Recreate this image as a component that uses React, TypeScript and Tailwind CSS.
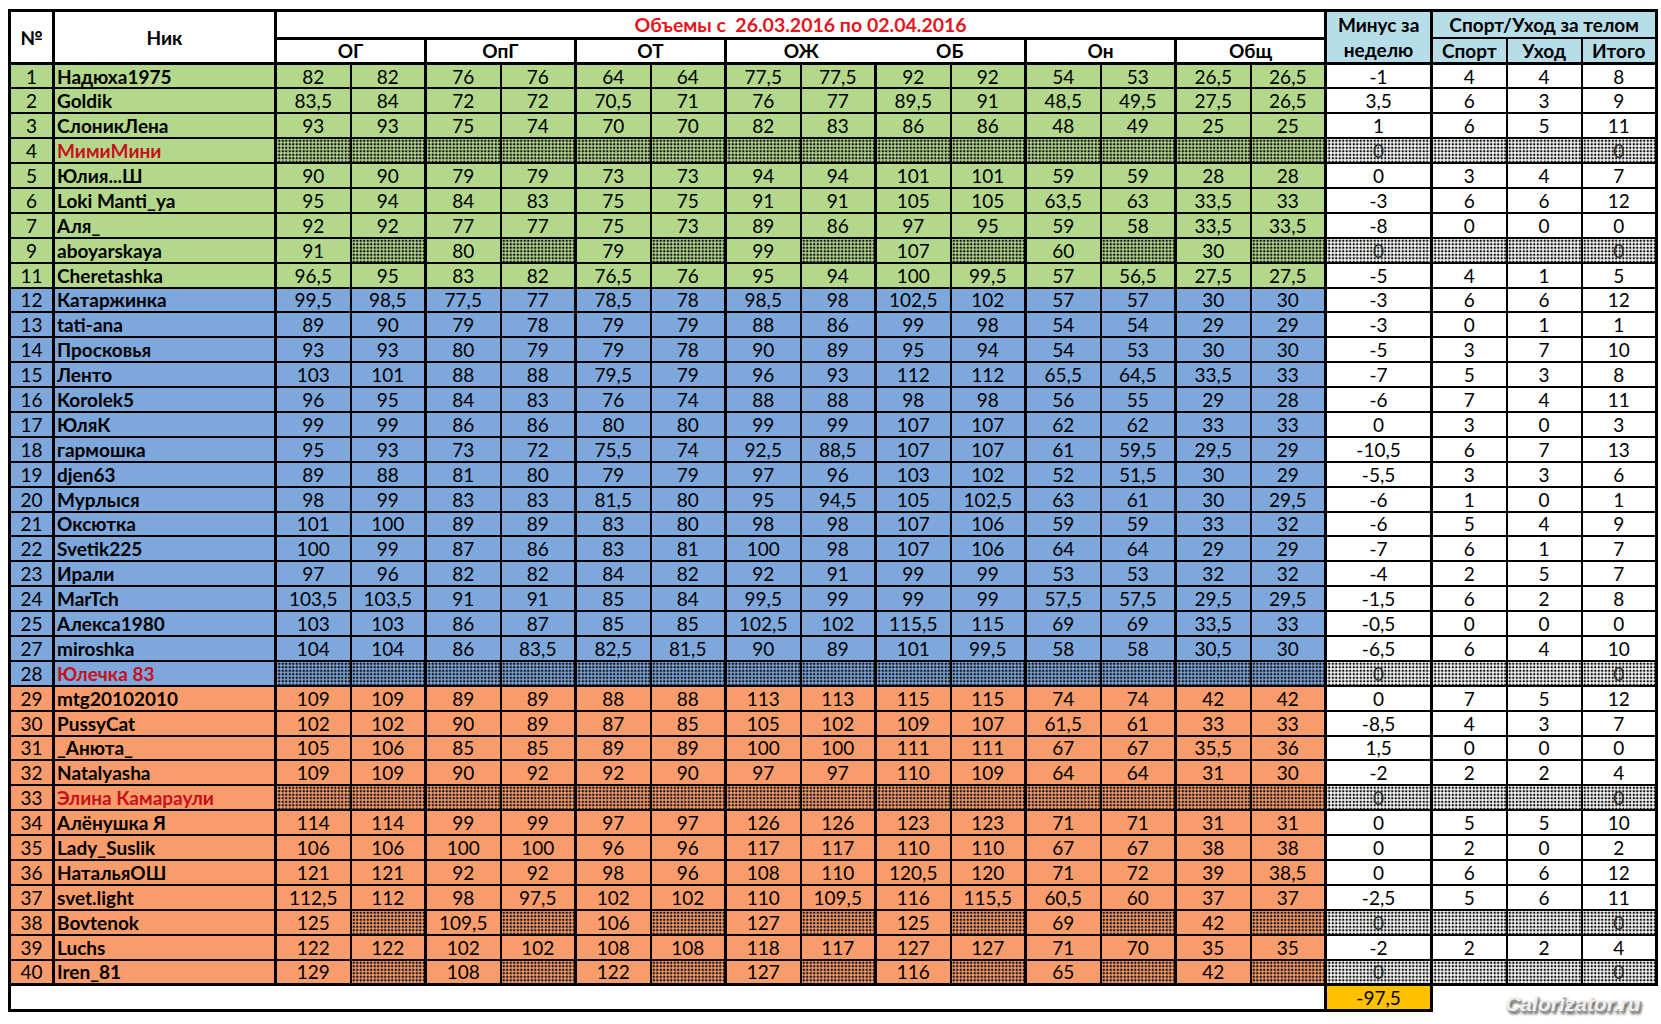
import React from 'react';

const GROUPS = ['ОГ', 'ОпГ', 'ОТ', 'ОЖ', 'ОБ', 'Он', 'Общ'];

// № | ник | 14 замеров | минус, спорт, уход, итого  ("x" / "#" = заштриховано)
const RAW: [string, string][] = [
  ['g', '1|Надюха1975|82 82 76 76 64 64 77,5 77,5 92 92 54 53 26,5 26,5|-1 4 4 8'],
  ['g', '2|Goldik|83,5 84 72 72 70,5 71 76 77 89,5 91 48,5 49,5 27,5 26,5|3,5 6 3 9'],
  ['g', '3|СлоникЛена|93 93 75 74 70 70 82 83 86 86 48 49 25 25|1 6 5 11'],
  ['g', '4|!МимиМини|x x x x x x x x x x x x x x|#0 # # #0'],
  ['g', '5|Юлия...Ш|90 90 79 79 73 73 94 94 101 101 59 59 28 28|0 3 4 7'],
  ['g', '6|Loki Manti_ya|95 94 84 83 75 75 91 91 105 105 63,5 63 33,5 33|-3 6 6 12'],
  ['g', '7|Аля_|92 92 77 77 75 73 89 86 97 95 59 58 33,5 33,5|-8 0 0 0'],
  ['g', '9|aboyarskaya|91 x 80 x 79 x 99 x 107 x 60 x 30 x|#0 # # #0'],
  ['g', '11|Cheretashka|96,5 95 83 82 76,5 76 95 94 100 99,5 57 56,5 27,5 27,5|-5 4 1 5'],
  ['b', '12|Катаржинка|99,5 98,5 77,5 77 78,5 78 98,5 98 102,5 102 57 57 30 30|-3 6 6 12'],
  ['b', '13|tati-ana|89 90 79 78 79 79 88 86 99 98 54 54 29 29|-3 0 1 1'],
  ['b', '14|Просковья|93 93 80 79 79 78 90 89 95 94 54 53 30 30|-5 3 7 10'],
  ['b', '15|Ленто|103 101 88 88 79,5 79 96 93 112 112 65,5 64,5 33,5 33|-7 5 3 8'],
  ['b', '16|Korolek5|96 95 84 83 76 74 88 88 98 98 56 55 29 28|-6 7 4 11'],
  ['b', '17|ЮляК|99 99 86 86 80 80 99 99 107 107 62 62 33 33|0 3 0 3'],
  ['b', '18|гармошка|95 93 73 72 75,5 74 92,5 88,5 107 107 61 59,5 29,5 29|-10,5 6 7 13'],
  ['b', '19|djen63|89 88 81 80 79 79 97 96 103 102 52 51,5 30 29|-5,5 3 3 6'],
  ['b', '20|Мурлыся|98 99 83 83 81,5 80 95 94,5 105 102,5 63 61 30 29,5|-6 1 0 1'],
  ['b', '21|Оксютка|101 100 89 89 83 80 98 98 107 106 59 59 33 32|-6 5 4 9'],
  ['b', '22|Svetik225|100 99 87 86 83 81 100 98 107 106 64 64 29 29|-7 6 1 7'],
  ['b', '23|Ирали|97 96 82 82 84 82 92 91 99 99 53 53 32 32|-4 2 5 7'],
  ['b', '24|MarTch|103,5 103,5 91 91 85 84 99,5 99 99 99 57,5 57,5 29,5 29,5|-1,5 6 2 8'],
  ['b', '25|Алекса1980|103 103 86 87 85 85 102,5 102 115,5 115 69 69 33,5 33|-0,5 0 0 0'],
  ['b', '27|miroshka|104 104 86 83,5 82,5 81,5 90 89 101 99,5 58 58 30,5 30|-6,5 6 4 10'],
  ['b', '28|!Юлечка 83|x x x x x x x x x x x x x x|#0 # # #0'],
  ['o', '29|mtg20102010|109 109 89 89 88 88 113 113 115 115 74 74 42 42|0 7 5 12'],
  ['o', '30|PussyCat|102 102 90 89 87 85 105 102 109 107 61,5 61 33 33|-8,5 4 3 7'],
  ['o', '31|_Анюта_|105 106 85 85 89 89 100 100 111 111 67 67 35,5 36|1,5 0 0 0'],
  ['o', '32|Natalyasha|109 109 90 92 92 90 97 97 110 109 64 64 31 30|-2 2 2 4'],
  ['o', '33|!Элина Камараули|x x x x x x x x x x x x x x|#0 # # #0'],
  ['o', '34|Алёнушка Я|114 114 99 99 97 97 126 126 123 123 71 71 31 31|0 5 5 10'],
  ['o', '35|Lady_Suslik|106 106 100 100 96 96 117 117 110 110 67 67 38 38|0 2 0 2'],
  ['o', '36|НатальяОШ|121 121 92 92 98 96 108 110 120,5 120 71 72 39 38,5|0 6 6 12'],
  ['o', '37|svet.light|112,5 112 98 97,5 102 102 110 109,5 116 115,5 60,5 60 37 37|-2,5 5 6 11'],
  ['o', '38|Bovtenok|125 x 109,5 x 106 x 127 x 125 x 69 x 42 x|#0 # # #0'],
  ['o', '39|Luchs|122 122 102 102 108 108 118 117 127 127 71 70 35 35|-2 2 2 4'],
  ['o', '40|Iren_81|129 x 108 x 122 x 127 x 116 x 65 x 42 x|#0 # # #0'],
];

const FILL: Record<string, string> = {
  g: 'bg-[#b3d88c]',
  b: 'bg-[#7ea7dc]',
  o: 'bg-[#f99c6b]',
};

const HATCH = 'bg-[radial-gradient(circle,#111_1.1px,transparent_1.5px)] bg-[length:3.5px_3.5px]';

const rows = RAW.map(([grp, line]) => {
  const [n, rawName, vals, right] = line.split('|');
  const red = rawName.startsWith('!');
  return {
    grp,
    n,
    name: red ? rawName.slice(1) : rawName,
    red,
    vals: vals.split(' '),
    right: right.split(' '),
  };
});

const td = 'border-2 border-black p-0 text-center align-middle';

export default function App() {
  return (
    <div className="min-h-[1024px] bg-white pl-[8px] pt-[9px] font-['Lato','Noto_Sans',sans-serif] text-[19px] leading-none text-black">
      <table className="table-fixed border-collapse w-[1647px]">
        <colgroup>
          <col className="w-[44px]" />
          <col className="w-[222px]" />
          {Array.from({ length: 14 }).map((_, i) => (
            <col key={i} className="w-[75px]" />
          ))}
          <col className="w-[106px]" />
          <col className="w-[75px]" />
          <col className="w-[75px]" />
          <col className="w-[75px]" />
        </colgroup>
        <thead>
          <tr className="h-[27px]">
            <th rowSpan={2} className={`${td} border-[3px] bg-white font-bold`}>№</th>
            <th rowSpan={2} className={`${td} border-[3px] bg-white font-bold`}>Ник</th>
            <th colSpan={14} className={`${td} border-[3px] bg-white text-[19.5px] font-bold text-[#e5141c] whitespace-pre`}>
              Объемы с  26.03.2016 по 02.04.2016
            </th>
            <th rowSpan={2} className={`${td} border-[3px] bg-[#b7dee8] font-bold leading-[25px]`}>
              Минус за
              <br />
              неделю
            </th>
            <th colSpan={3} className={`${td} border-[3px] border-b-2 bg-[#b7dee8] font-bold`}>
              Спорт/Уход за телом
            </th>
          </tr>
          <tr className="h-[25px]">
            {GROUPS.map((g) => (
              <th
                key={g}
                colSpan={2}
                className={`${td} border-[3px] bg-white font-bold ${g === 'ОЖ' ? 'border-r-0' : ''} ${g === 'ОБ' ? 'border-l-0' : ''}`}
              >
                {g}
              </th>
            ))}
            <th className={`${td} border-l-[3px] border-b-[3px] bg-[#b7dee8] font-bold`}>Спорт</th>
            <th className={`${td} border-b-[3px] bg-[#b7dee8] font-bold`}>Уход</th>
            <th className={`${td} border-b-[3px] border-r-[3px] bg-[#b7dee8] font-bold`}>Итого</th>
          </tr>
        </thead>
        <tbody>
          {rows.map((r, ri) => {
            const last = ri === rows.length - 1 ? 'border-b-[3px]' : '';
            return (
              <tr key={r.n} className="h-[24.9px]">
                <td className={`${td} ${last} border-l-[3px] border-r-[3px] ${FILL[r.grp]}`}>{r.n}</td>
                <td className={`${td} ${last} border-r-[3px] pl-[2px] text-left font-bold ${FILL[r.grp]} ${r.red ? 'text-[#c8101c]' : ''}`}>
                  {r.name}
                </td>
                {r.vals.map((v, vi) => (
                  <td
                    key={vi}
                    className={`${td} ${last} ${FILL[r.grp]} ${vi % 2 === 0 ? 'border-l-[3px]' : 'border-r-[3px]'} ${v === 'x' ? HATCH : ''}`}
                  >
                    {v === 'x' ? '' : v}
                  </td>
                ))}
                {r.right.map((v, vi) => {
                  const hatched = v.startsWith('#');
                  const text = hatched ? v.slice(1) : v;
                  const edge =
                    vi === 0 ? 'border-l-[3px] border-r-[3px]' : vi === 3 ? 'border-r-[3px]' : '';
                  return (
                    <td
                      key={vi}
                      className={`${td} ${last} ${edge} bg-white ${hatched ? `${HATCH} text-[#2a2a2a]` : ''}`}
                    >
                      {text}
                    </td>
                  );
                })}
              </tr>
            );
          })}
          <tr className="h-[26px]">
            <td colSpan={16} className={`${td} border-[3px] bg-white`} />
            <td className={`${td} border-[3px] bg-[#ffc000]`}>-97,5</td>
            <td colSpan={3} className="border-0 p-0 pr-[16px] text-right align-bottom">
              <span className="relative top-[4px] font-['Liberation_Sans',sans-serif] text-[21px] font-bold italic text-[#eeeeee] [text-shadow:1px_1px_0_#999,2px_3px_3px_#444]">
                Calorizator.ru
              </span>
            </td>
          </tr>
        </tbody>
      </table>
    </div>
  );
}
